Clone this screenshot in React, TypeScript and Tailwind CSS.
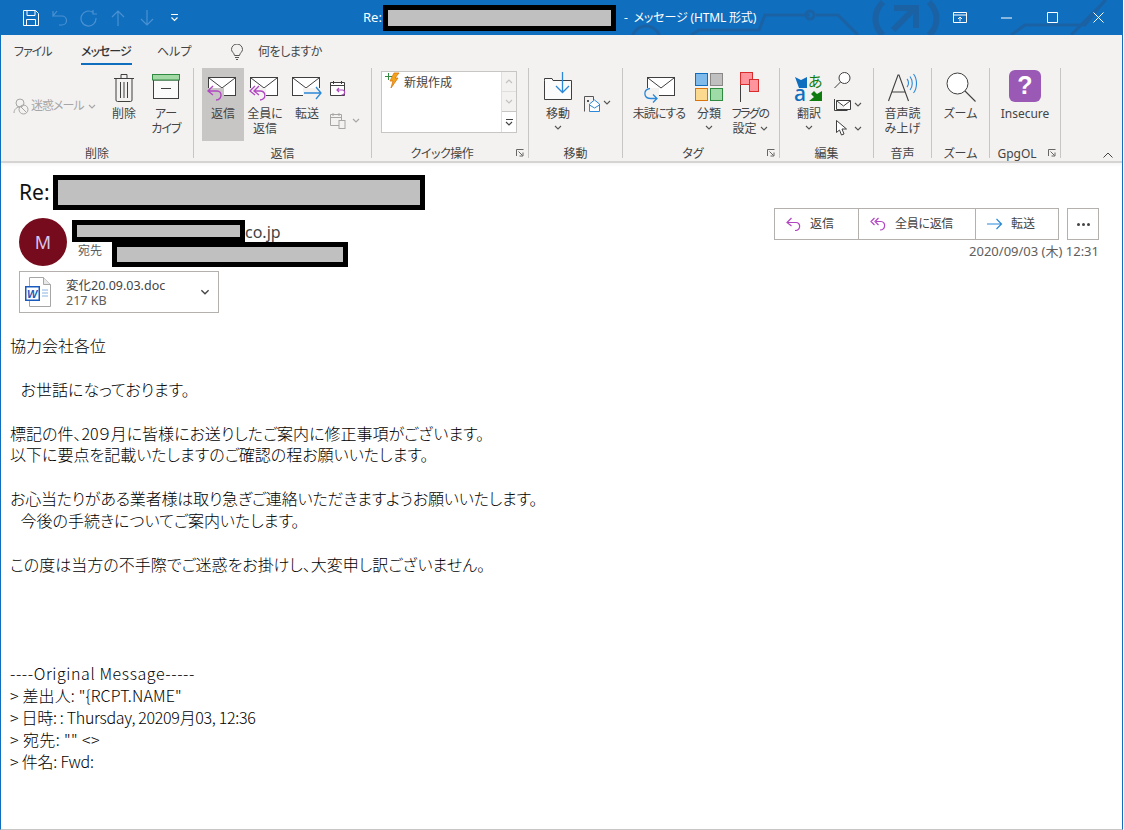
import { ReactNode } from 'react';

const ui = "font-['Noto_Sans','Noto_Sans_CJK_JP',sans-serif] [font-feature-settings:'palt']";
const purple = '#b146c2';
const blue = '#2b88d8';

const bodyLines = [
  { text: '協力会社各位' },
  { text: '' },
  { text: '   お世話になっております。' },
  { text: '' },
  { text: '標記の件、20９月に皆様にお送りしたご案内に修正事項がございます。' },
  { text: '以下に要点を記載いたしますのご確認の程お願いいたします。' },
  { text: '' },
  { text: 'お心当たりがある業者様は取り急ぎご連絡いただきますようお願いいたします。', className: 'tracking-[-0.2px]' },
  { text: '   今後の手続きについてご案内いたします。' },
  { text: '' },
  { text: 'この度は当方の不手際でご迷惑をお掛けし、大変申し訳ございません。' },
  { text: '' },
  { text: '' },
  { text: '' },
  { text: '' },
  { text: '----Original Message-----', className: 'tracking-[0.6px]' },
  { text: '> 差出人: "{RCPT.NAME"', className: 'tracking-[0.15px]' },
  { text: '> 日時: : Thursday, 20209月03, 12:36', className: 'tracking-[-0.3px]' },
  { text: '> 宛先: "" <>', className: 'tracking-[0.4px]' },
  { text: '> 件名: Fwd:', className: 'tracking-[-0.2px]' },
];

function Chevron({ color = '#555555', className = '' }: { color?: string; className?: string }) {
  return (
    <svg width="8" height="5" viewBox="0 0 8 5" className={className}>
      <path d="M1 1l3 3 3-3" fill="none" stroke={color} strokeWidth="1.1" />
    </svg>
  );
}

function Launcher() {
  return (
    <svg width="8" height="8" viewBox="0 0 8 8" className="absolute right-[4px] bottom-[1px]">
      <path d="M.5 7V.5H7.5M2.5 2.5L6.5 6.5M7 3.5V7H3.5" fill="none" stroke="#666666" strokeWidth="1" />
    </svg>
  );
}

function Envelope({ children }: { children?: ReactNode }) {
  return (
    <svg width="32" height="30" viewBox="0 0 32 30" className="mt-[3px]">
      <rect x="1.5" y="3.5" width="27" height="18" fill="#fff" stroke="#3f3f3f" />
      <path d="M2 4l13 10L28 4" fill="none" stroke="#3f3f3f" />
      {children}
    </svg>
  );
}

function ReplyIcon() {
  return (
    <Envelope>
      <rect x="0" y="14" width="17" height="14" fill="#c8c6c4" />
      <path d="M6 12l-5 5 5 4M1.5 17H10c5 0 6 8-1 9" fill="none" stroke={purple} strokeWidth="1.4" />
    </Envelope>
  );
}

function ReplyAllIcon() {
  return (
    <Envelope>
      <rect x="0" y="14" width="17" height="14" fill="#f3f2f1" />
      <path d="M6 12l-5 5 5 4M10 12l-5 5 5 4M6 17h5c6 0 7 8 0 9" fill="none" stroke={purple} strokeWidth="1.3" />
    </Envelope>
  );
}

function ForwardIcon() {
  return (
    <Envelope>
      <rect x="12" y="14" width="20" height="12" fill="#f3f2f1" />
      <path d="M13 19h17M25 13l5 6-5 6" fill="none" stroke={blue} strokeWidth="1.3" />
    </Envelope>
  );
}

function BigButton({ icon, lines, chevron, active, w = 42 }: { icon: ReactNode; lines: ReactNode[]; chevron?: boolean; active?: boolean; w?: number }) {
  return (
    <div className={`flex h-[73px] shrink-0 flex-col items-center text-center ${active ? 'bg-[#c8c6c4]' : ''}`} style={{ width: w }}>
      <div className="flex h-[38px] w-full items-center justify-center">{icon}</div>
      {lines.map((line, i) => (
        <div key={i} className="flex items-center whitespace-nowrap text-[12px] leading-[15px]">{line}</div>
      ))}
      {chevron && <Chevron className="mt-[4px]" />}
    </div>
  );
}

function Group({ label, width, launcher, children, className = '', labelClass = '' }: { label: string; width: number; launcher?: boolean; children: ReactNode; className?: string; labelClass?: string }) {
  return (
    <div className="relative flex h-[90px] shrink-0 flex-col border-r border-[#c8c6c4]" style={{ width }}>
      <div className={`flex h-[73px] shrink-0 ${className}`}>{children}</div>
      <div className={`mt-[5px] text-center text-[12px] leading-[16px] ${launcher ? 'pr-[16px]' : ''} ${labelClass}`}>{label}</div>
      {launcher && <Launcher />}
    </div>
  );
}

function Redacted({ className }: { className: string }) {
  return <div className={`shrink-0 border-[5px] border-black bg-[#c0c0c0] ${className}`} />;
}

function TitleBar() {
  return (
    <div className={`relative flex h-[35px] shrink-0 items-center overflow-hidden bg-[#106ebe] text-white ${ui}`}>
      <svg width="1124" height="35" viewBox="0 0 1124 35" className="absolute left-0 top-0">
        <g fill="none" stroke="#1b62a5" strokeWidth="3">
          <circle cx="645" cy="40" r="14" />
          <path d="M690 35l8-5h60l6-15h45M815 15h22l20 20" />
          <circle cx="809" cy="15" r="4" />
          <path d="M1010 35l14-10h60l20-25M1070 35l35-35" />
        </g>
        <g fill="none" stroke="#1b62a5" strokeWidth="6">
          <path d="M882 2c-10 10-10 24 0 33M928 2c10 10 10 24 0 33M893 8h22v20M914 8L892 30" />
        </g>
      </svg>
      <div className="relative flex w-full items-center pr-[18px]">
        <svg width="18" height="18" viewBox="0 0 18 18" className="ml-[21px]">
          <path d="M1.5 1.5h12l3 3v12h-15zM5 1.5v5h8v-5M4.5 16.5v-6h9v6" fill="none" stroke="#ffffff" />
        </svg>
        <svg width="16" height="16" viewBox="0 0 16 16" className="ml-[12px]">
          <path d="M5 1L1 6h9a4.500 4.500 0 0 1 0 9H7M1 6V1" fill="none" stroke="#4a91d2" strokeWidth="1.2" />
        </svg>
        <svg width="18" height="18" viewBox="0 0 18 18" className="ml-[12px]">
          <path d="M13 3.500A7.500 7.500 0 1 0 16 9M13 1v4h4" fill="none" stroke="#4a91d2" strokeWidth="1.2" />
        </svg>
        <svg width="16" height="16" viewBox="0 0 16 16" className="ml-[12px]">
          <path d="M8 16V1M2 7l6-6 6 6" fill="none" stroke="#4a91d2" strokeWidth="1.2" />
        </svg>
        <svg width="16" height="16" viewBox="0 0 16 16" className="ml-[13px]">
          <path d="M8 0v15M2 9l6 6 6-6" fill="none" stroke="#4a91d2" strokeWidth="1.2" />
        </svg>
        <svg width="9" height="9" viewBox="0 0 9 9" className="ml-[15px]">
          <path d="M1 1.500h7M1.500 4.500L4.500 7.500l3-3" fill="none" stroke="#ffffff" strokeWidth="1.100" />
        </svg>
        <div className="ml-[184px] text-[13px]">Re:</div>
        <Redacted className="ml-[1px] h-[26px] w-[233px]" />
        <div className="ml-[8px] whitespace-pre text-[12px] tracking-[-0.15px]">-  メッセージ (HTML 形式)</div>
        <svg width="14" height="12" viewBox="0 0 14 12" className="ml-auto">
          <path d="M.5.5h13v10H.5zM.5 3h13M7 9.500V5M5 7l2-2 2 2" fill="none" stroke="#ffffff" />
        </svg>
        <svg width="11" height="2" viewBox="0 0 11 2" className="ml-[34px]">
          <path d="M0 1h11" stroke="#ffffff" />
        </svg>
        <svg width="11" height="11" viewBox="0 0 11 11" className="ml-[35px]">
          <path d="M.5.5h10v10H.5z" fill="none" stroke="#ffffff" />
        </svg>
        <svg width="11" height="11" viewBox="0 0 11 11" className="ml-[35px]">
          <path d="M.5.5l10 10M10.500.5l-10 10" fill="none" stroke="#ffffff" />
        </svg>
      </div>
    </div>
  );
}

function Tabs() {
  return (
    <div className="flex h-[33px] items-center pl-[13px] text-[12px]">
      <div className="w-[67px] tracking-[-1px]">ファイル</div>
      <div className="relative w-[76px] font-medium tracking-[-1px] text-[#333333]">
        メッセージ
        <div className="absolute left-0 top-[20px] h-[2px] w-[51px] bg-[#106ebe]" />
      </div>
      <div className="w-[73px]">ヘルプ</div>
      <svg width="14" height="16" viewBox="0 0 14 16">
        <path d="M4.500 11.500C4 8.500 1.500 8 1.500 5.500a5.500 5.500 0 0 1 11 0C12.500 8 10 8.500 9.500 11.500zM5 13.500h4M6 15.500h2" fill="none" stroke="#555555" />
      </svg>
      <div className="ml-[14px] tracking-[-0.5px]">何をしますか</div>
    </div>
  );
}

function Ribbon() {
  return (
    <div className={`h-[128px] shrink-0 border-b-2 border-[#d6d4d2] bg-[#f3f2f1] text-[#444444] ${ui} shadow-[0_2px_3px_rgba(0,0,0,0.04)]`}>
      <Tabs />
      <div className="relative flex">
        <Group label="削除" width={193} className="pl-[12px]">
          <div className="mt-[29px] flex h-[18px] w-[90px] items-center text-[12px] text-[#a6a6a6]">
            <svg width="16" height="17" viewBox="0 0 16 17">
              <circle cx="7" cy="5" r="4" fill="none" stroke="#a6a6a6" />
              <path d="M1 15c0-4 3-6 6-6" fill="none" stroke="#a6a6a6" />
              <circle cx="10.500" cy="11.500" r="4.500" fill="none" stroke="#a6a6a6" />
              <path d="M7.500 8.500l6 6" stroke="#a6a6a6" />
            </svg>
            <span className="ml-[2px] whitespace-nowrap tracking-[-1px]">迷惑メール</span>
            <Chevron color="#a6a6a6" className="ml-[4px]" />
          </div>
          <BigButton
            lines={['削除']}
            icon={
              <svg width="22" height="30" viewBox="0 0 22 30" className="mt-[1px]">
                <path d="M1 5.500h20M8 5.500V1.500h6v4M3 5.500V27q0 1.500 1.500 1.500h13q1.500 0 1.500-1.500V5.500M7.500 9v16M11 9v16M14.500 9v16" fill="none" stroke="#3f3f3f" />
              </svg>
            }
          />
          <BigButton
            lines={['アー', <span className="tracking-[-1px]">カイブ</span>]}
            icon={
              <svg width="28" height="26" viewBox="0 0 28 26">
                <rect x="1.500" y="6" width="25" height="18.500" fill="#fbfbfb" stroke="#3f3f3f" />
                <rect x=".500" y=".500" width="27" height="5.500" fill="#a3d9a5" stroke="#2e8b40" />
                <path d="M9 14.500h10" stroke="#3f3f3f" />
              </svg>
            }
          />
        </Group>
        <Group label="返信" width={178} className="pl-[8px]">
          <BigButton active lines={['返信']} icon={<ReplyIcon />} />
          <BigButton lines={['全員に', '返信']} icon={<ReplyAllIcon />} />
          <BigButton lines={['転送']} icon={<ForwardIcon />} />
          <div className="ml-[2px] flex flex-col">
            <svg width="17" height="17" viewBox="0 0 17 17" className="mt-[12px]">
              <path d="M.5 2.500h14v13H.5zM.5 5.500h14M3.500 1v3M11.500 1v3" fill="#fff" stroke="#3f3f3f" />
              <path d="M9 8L7 10l2 2M7.500 10h5c3 0 3 5-1 5" fill="none" stroke={purple} strokeWidth="1.200" />
            </svg>
            <div className="mt-[15px] flex items-center">
              <svg width="17" height="17" viewBox="0 0 17 17">
                <path d="M.5 2.500h11v11H.5zM.5 5.500h11M3 1v3M9 1v3" fill="none" stroke="#a6a6a6" />
                <rect x="9" y="8.500" width="6" height="8" fill="#f3f2f1" stroke="#a6a6a6" />
              </svg>
              <Chevron color="#a6a6a6" className="ml-[5px]" />
            </div>
          </div>
        </Group>
        <Group label="クイック操作" width={157} launcher className="pl-[9px]" labelClass="tracking-[-0.5px]">
          <div className="mt-[3px] flex h-[62px] w-[136px] border border-[#c8c6c4] bg-white">
            <div className="flex flex-1 items-start">
              <svg width="15" height="17" viewBox="0 0 15 17" className="ml-[3px] shrink-0">
                <path d="M9 1h5l-4 5h3l-7 10 2-7H5z" fill="#f2a51a" stroke="#d9730d" strokeWidth=".8" />
                <path d="M3.500 1v7M0 4.500h7" stroke="#2e8b40" strokeWidth="1" />
              </svg>
              <span className="ml-[4px] mt-[3px] whitespace-nowrap text-[12px] leading-[16px]">新規作成</span>
            </div>
            <div className="flex w-[15px] flex-col border-l border-[#e1dfdd] bg-[#f3f2f1]">
              <div className="flex h-[20px] items-center justify-center border-b border-[#e1dfdd]">
                <Chevron color="#c0c0c0" className="rotate-180" />
              </div>
              <div className="flex h-[20px] items-center justify-center border-b border-[#c8c6c4]">
                <Chevron color="#c0c0c0" />
              </div>
              <div className="flex flex-1 flex-col items-center justify-center bg-white">
                <div className="mb-[1px] h-px w-[7px] bg-[#444444]" />
                <Chevron color="#444444" />
              </div>
            </div>
          </div>
        </Group>
        <Group label="移動" width={94} className="pl-[8px]">
          <BigButton
            lines={['移動']}
            chevron
            icon={
              <svg width="29" height="28" viewBox="0 0 29 28" className="mt-[-2px]">
                <path d="M.5 8.500V27.500h27V8.500H9L8 6.500H.5z" fill="#fbfbfb" stroke="#3f3f3f" />
                <path d="M18.500 0v20M12 14l6.500 6.500L25 14" fill="none" stroke={blue} strokeWidth="1.300" />
              </svg>
            }
          />
          <div className="ml-[5px] mt-[28px] flex h-[17px] items-start">
            <svg width="17" height="16" viewBox="0 0 17 16">
              <path d="M.5 15.500V.5h9v4" fill="none" stroke="#555555" />
              <path d="M3 4h2v2H3z" fill="#555555" />
              <path d="M5.500 8l5-4 5 4v7.500h-10z" fill="#fff" stroke={blue} />
              <path d="M5.500 9l5 3 5-3" fill="none" stroke={blue} />
            </svg>
            <Chevron className="ml-[2px] mt-[4px]" />
          </div>
        </Group>
        <Group label="タグ" width={157} launcher className="pl-[7px]">
          <BigButton
            w={58}
            lines={[<span className="tracking-[-1px]">未読にする</span>]}
            icon={
              <svg width="32" height="30" viewBox="0 0 32 30" className="mt-[8px]">
                <rect x="4.500" y="1.500" width="27" height="18" fill="#fff" stroke="#3f3f3f" />
                <path d="M5 2l13 10L31 2" fill="none" stroke="#3f3f3f" />
                <rect x="0" y="12" width="16" height="16" fill="#f3f2f1" />
                <path d="M10 26.500l4-4-4-4M14 22.500H8c-8 0-8-9-1-10" fill="none" stroke={blue} strokeWidth="1.300" />
              </svg>
            }
          />
          <BigButton
            w={42}
            lines={['分類']}
            chevron
            icon={
              <div className="grid grid-cols-2 gap-[2px]">
                <div className="h-[13px] w-[13px] border border-[#106ebe] bg-[#7fbaea]" />
                <div className="h-[13px] w-[13px] border border-[#8a8886] bg-[#c0c0c0]" />
                <div className="h-[13px] w-[13px] border border-[#d9730d] bg-[#fbd98f]" />
                <div className="h-[13px] w-[13px] border border-[#2e8b40] bg-[#9fdba6]" />
              </div>
            }
          />
          <BigButton
            w={40}
            lines={[
              <span className="tracking-[-1.500px]">フラグの</span>,
              <>
                設定
                <Chevron className="ml-[3px]" />
              </>,
            ]}
            icon={
              <svg width="20" height="30" viewBox="0 0 20 30">
                <path d="M.5 0v30" stroke="#3f3f3f" />
                <rect x=".500" y=".500" width="12" height="12" fill="#ff949c" stroke="#d92c2c" />
                <rect x="9.500" y="7.500" width="9" height="12" fill="#ff949c" stroke="#d92c2c" />
              </svg>
            }
          />
        </Group>
        <Group label="編集" width={94} className="pl-[8px]">
          <BigButton
            lines={['翻訳']}
            chevron
            icon={
              <svg width="30" height="30" viewBox="0 0 30 30" className="overflow-visible">
                <path d="M1 5l6 3 6-3v11H5z" fill="#106ebe" />
                <path d="M28 19v10H15l5-4-3-3 3-3 3 3z" fill="#107c10" />
                <text x="14" y="14.500" fontSize="15" fill="#107c10" fontFamily="'Noto Sans CJK JP'">あ</text>
                <text x="0" y="29" fontSize="21" fill="#106ebe" fontFamily="'Noto Sans'" fontWeight="500">a</text>
              </svg>
            }
          />
          <div className="ml-[4px] flex flex-col pt-[4px]">
            <svg width="17" height="17" viewBox="0 0 17 17">
              <circle cx="10.500" cy="6" r="5.500" fill="#fff" stroke="#3f3f3f" />
              <path d="M6.500 10L.5 16" stroke="#3f3f3f" />
            </svg>
            <div className="mt-[9px] flex items-center">
              <svg width="17" height="13" viewBox="0 0 17 13">
                <path d="M.5 1v11.500h13M2.500 2.500h14v9h-14z" fill="#fff" stroke="#3f3f3f" />
                <path d="M3 3l6.500 5L16 3" fill="none" stroke="#3f3f3f" />
              </svg>
              <Chevron className="ml-[3px]" />
            </div>
            <div className="ml-[2px] mt-[9px] flex items-center">
              <svg width="12" height="16" viewBox="0 0 12 16">
                <path d="M.5.500v12l3-2.500 2 5 2.500-1-2-5h4.500z" fill="#fff" stroke="#3f3f3f" />
              </svg>
              <Chevron className="ml-[6px]" />
            </div>
          </div>
        </Group>
        <Group label="音声" width={58}>
          <BigButton
            w={57}
            lines={['音声読', 'み上げ']}
            icon={
              <svg width="30" height="29" viewBox="0 0 30 29">
                <path d="M.5 28L10 2h1l9.500 26M4 19h13" fill="none" stroke="#3f3f3f" strokeWidth="1.100" />
                <path d="M19 6c2 2 2 6 0 8M22 3.500c3 4 3 10 0 13.500M25.500 1c4 5 4 14 0 19" fill="none" stroke={blue} strokeWidth="1.100" />
              </svg>
            }
          />
        </Group>
        <Group label="ズーム" width={58}>
          <BigButton
            w={57}
            lines={['ズーム']}
            icon={
              <svg width="30" height="30" viewBox="0 0 30 30">
                <circle cx="11.500" cy="11.500" r="10.500" fill="#fff" stroke="#3f3f3f" />
                <path d="M19 19l10.500 10.500" stroke="#3f3f3f" strokeWidth="1.100" />
              </svg>
            }
          />
        </Group>
        <Group label="GpgOL" width={71} launcher>
          <BigButton
            w={70}
            lines={['Insecure']}
            icon={
              <div className="mt-[-2px] flex h-[32px] w-[32px] items-center justify-center rounded-[6px] bg-[#9b59b6] font-['Liberation_Sans',sans-serif] text-[25px] font-bold text-white">?</div>
            }
          />
        </Group>
        <svg width="10" height="6" viewBox="0 0 10 6" className="absolute left-[1102px] top-[84px]">
          <path d="M.5 5.500L5 1l4.500 4.500" fill="none" stroke="#444444" />
        </svg>
      </div>
    </div>
  );
}

function ActionButton({ icon, label, width, labelClass = '' }: { icon: ReactNode; label: string; width: number; labelClass?: string }) {
  return (
    <div className="flex h-full items-center border-r border-[#b3b0ad] pl-[11px] last:border-r-0" style={{ width }}>
      {icon}
      <span className={`ml-[8px] whitespace-nowrap ${labelClass}`}>{label}</span>
    </div>
  );
}

function MessageHeader() {
  return (
    <div className={`flex justify-between pl-[18px] pr-[23px] pt-[12px] text-[#444444] ${ui}`}>
      <div>
        <div className="flex h-[35px] items-center">
          <span className="text-[21px] text-[#111111]">Re:</span>
          <Redacted className="ml-[3px] h-[35px] w-[372px]" />
        </div>
        <div className="mt-[8px] flex">
          <div className="flex h-[48px] w-[48px] shrink-0 items-center justify-center rounded-full bg-[#750b1c] text-[18px] text-[#d8c4e8]">M</div>
          <div className="ml-[5px]">
            <div className="mt-[2px] flex h-[22px] items-end">
              <Redacted className="h-[22px] w-[173px]" />
              <span className="text-[16px] leading-[20px]">co.jp</span>
            </div>
            <div className="flex h-[25px]">
              <span className="ml-[6px] mt-[1px] text-[12px] leading-[16px] text-[#605e5c]">宛先</span>
              <Redacted className="ml-[10px] h-[25px] w-[236px]" />
            </div>
          </div>
        </div>
        <div className="mt-[4px] flex h-[42px] w-[200px] items-center border border-[#b3b0ad]">
          <svg width="28" height="30" viewBox="0 0 28 30" className="ml-[5px] shrink-0">
            <path d="M4.500.5h14l7 7v22h-21z" fill="#fff" stroke="#a6a6a6" />
            <path d="M18.500.5v7h7" fill="#e8e8e8" stroke="#a6a6a6" />
            <path d="M17 13h6M17 16h6M17 19h6" stroke="#8ab4e0" />
            <rect x="0" y="9" width="15" height="15" fill="#185abd" />
            <rect x="1.500" y="10.500" width="12" height="12" fill="#fff" />
            <text x="2" y="20.500" fontSize="11" fontWeight="700" fontStyle="italic" fill="#185abd" fontFamily="'Liberation Sans'">W</text>
          </svg>
          <div className="ml-[13px] flex-1 pt-[1px] text-[12.500px] leading-[15px]">
            <div className="whitespace-nowrap">変化20.09.03.doc</div>
            <div className="text-[#605e5c]">217 KB</div>
          </div>
          <Chevron color="#444444" className="mr-[8px] h-[6px] w-[10px]" />
        </div>
      </div>
      <div className="flex flex-col items-end pt-[33px]">
        <div className="flex h-[32px] text-[12px]">
          <div className="flex border border-[#b3b0ad]">
            <ActionButton
              width={84}
              label="返信"
              icon={
                <svg width="16" height="14" viewBox="0 0 16 14">
                  <path d="M5.500 1L1 5.500 5.500 9M1.500 5.500H10c5 0 5 8-1 8" fill="none" stroke={purple} strokeWidth="1.200" />
                </svg>
              }
            />
            <ActionButton
              width={117}
              label="全員に返信"
              labelClass="tracking-[-0.3px]"
              icon={
                <svg width="17" height="14" viewBox="0 0 17 14">
                  <path d="M4.500 1L1 4.500 4.500 8M8.500 1L5 4.500 8.500 8M6 4.500h5c5 0 5 8.500-1 8.500" fill="none" stroke={purple} strokeWidth="1.200" />
                </svg>
              }
            />
            <ActionButton
              width={82}
              label="転送"
              icon={
                <svg width="16" height="12" viewBox="0 0 16 12">
                  <path d="M0 6h14.500M9.500 1l5 5-5 5" fill="none" stroke={blue} strokeWidth="1.200" />
                </svg>
              }
            />
          </div>
          <div className="ml-[8px] flex w-[32px] items-center justify-center gap-[2px] border border-[#b3b0ad]">
            <div className="h-[3px] w-[3px] rounded-full bg-[#444444]" />
            <div className="h-[3px] w-[3px] rounded-full bg-[#444444]" />
            <div className="h-[3px] w-[3px] rounded-full bg-[#444444]" />
          </div>
        </div>
        <div className="mt-[3px] whitespace-nowrap text-[13px] leading-[16px] text-[#605e5c]">2020/09/03 (木) 12:31</div>
      </div>
    </div>
  );
}

export default function App() {
  return (
    <div className="flex h-[830px] w-[1123px] flex-col overflow-hidden border-x border-b border-x-[#106ebe] border-b-[#c8c6c4] bg-white">
      <TitleBar />
      <Ribbon />
      <MessageHeader />
      <div className="mt-[22px] pl-[9px] font-['Noto_Sans_CJK_JP',sans-serif] text-[16px] font-light leading-[21.900px] text-black [font-feature-settings:'palt']">
        {bodyLines.map((line, i) => (
          <div key={i} className={`h-[21.900px] whitespace-pre ${line.className ?? ''}`}>{line.text}</div>
        ))}
      </div>
    </div>
  );
}
